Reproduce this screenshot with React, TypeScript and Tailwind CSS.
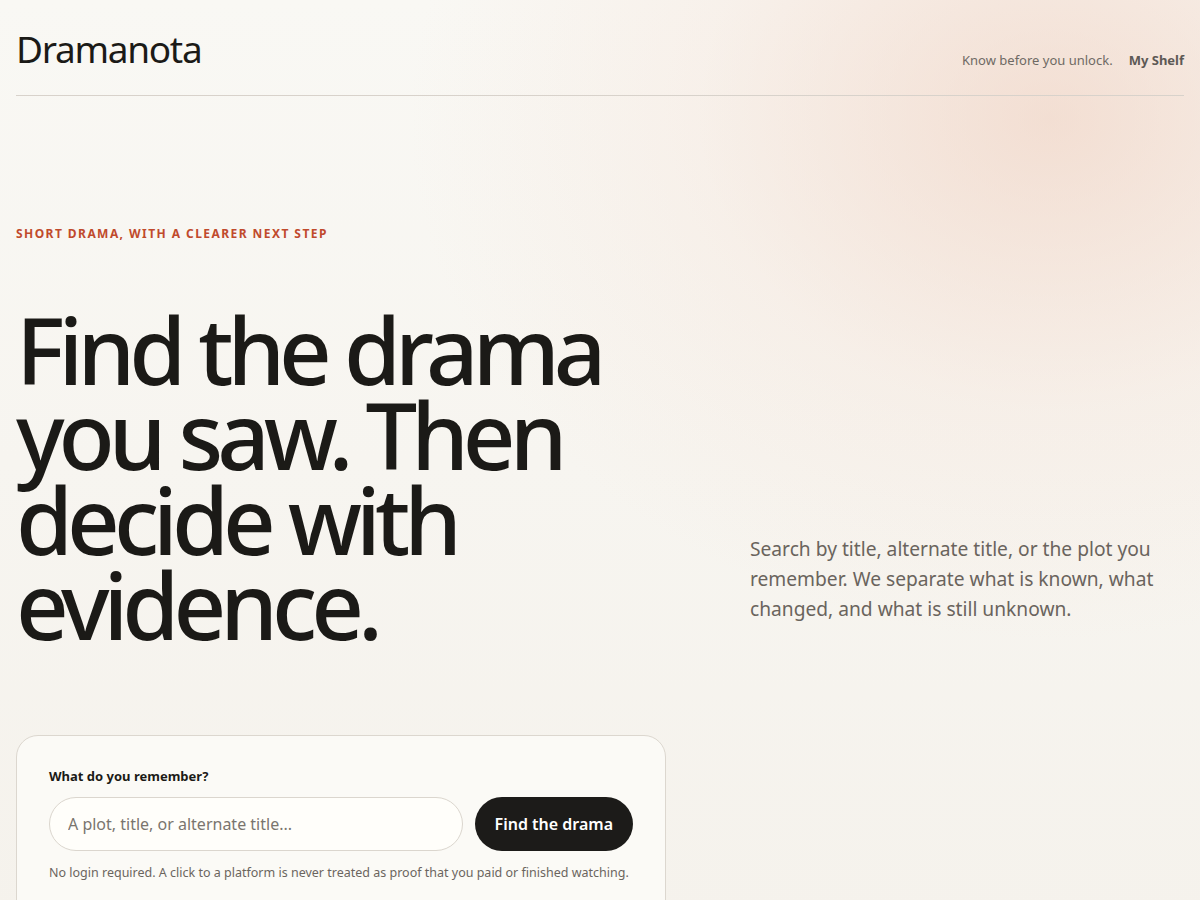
import React from "react";

export default function App() {
  return (
    <div
      className="min-h-[900px] w-full overflow-hidden bg-[radial-gradient(ellipse_640px_520px_at_1050px_120px,rgba(238,202,184,0.55),rgba(244,222,210,0.28)_55%,transparent_100%),linear-gradient(180deg,#f9f8f4,#f5f2ec)] text-[#1b1a17]"
      style={{ fontFamily: '"Noto Sans", "Open Sans", sans-serif' }}
    >
      <div className="px-4">
        <header className="flex items-end justify-between border-b border-[#d8d2cb] pt-[26px] pb-[23px]">
          <div className="text-[37px] leading-[46px] font-normal tracking-[-0.035em] text-[#1b1a17]">
            Dramanota
          </div>
          <nav className="mb-[2px] flex items-center gap-4 text-[13px] leading-5">
            <span className="text-[#6e6a64]">Know before you unlock.</span>
            <a className="font-bold text-[#5d5955]">My Shelf</a>
          </nav>
        </header>

        <main>
          <p className="mt-[130px] text-[12px] leading-4 font-bold tracking-[0.12em] text-[#c04a2c] uppercase">
            Short drama, with a clearer next step
          </p>

          <div className="mt-[65px] grid grid-cols-[1fr_434px] items-end gap-16">
            <h1 className="text-[92px] leading-[85px] font-medium tracking-[-0.065em] text-[#1b1a17]">
              Find the drama
              <br />
              you saw. Then
              <br />
              decide with
              <br />
              evidence.
            </h1>
            <p className="pb-[23px] text-[19.2px] leading-[30px] text-[#6a645d]">
              Search by title, alternate title, or the plot you remember. We
              separate what is known, what changed, and what is still unknown.
            </p>
          </div>

          <section className="mt-[88px] w-[650px] rounded-[22px] border border-[#dcd7cf] bg-[#fbfaf6] p-8 pb-10">
            <label className="block text-[13px] leading-4 font-bold text-[#1b1a17]">
              What do you remember?
            </label>
            <div className="mt-[13px] flex gap-3">
              <input
                className="h-[54px] flex-1 rounded-full border border-[#dbd6ce] bg-[#fffefa] px-[18px] text-[16px] text-[#1b1a17] outline-none placeholder:text-[#7a756e]"
                placeholder="A plot, title, or alternate title..."
              />
              <button className="h-[54px] rounded-full bg-[#1c1b19] px-5 text-[16px] font-semibold text-white">
                Find the drama
              </button>
            </div>
            <p className="mt-3 text-[12.5px] leading-5 text-[#6b655e]">
              No login required. A click to a platform is never treated as proof
              that you paid or finished watching.
            </p>
          </section>
        </main>
      </div>
    </div>
  );
}
